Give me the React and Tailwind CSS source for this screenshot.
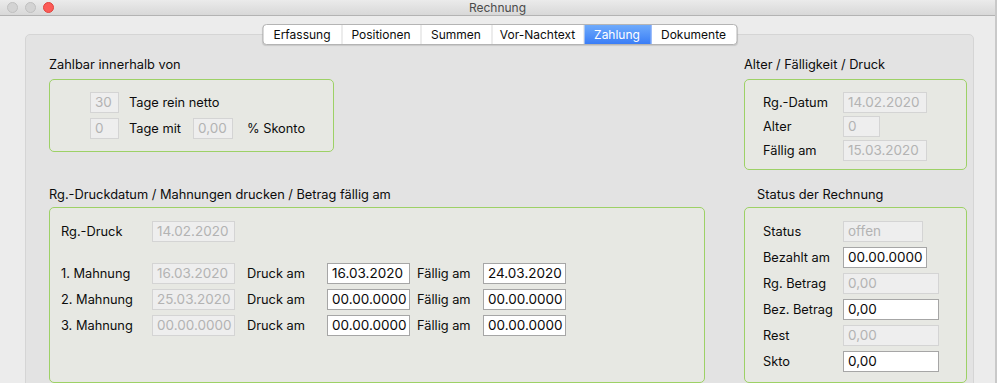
import React from "react"

const tabs = [
  ["Erfassung", 79],
  ["Positionen", 79],
  ["Summen", 71],
  ["Vor-Nachtext", 92],
  ["Zahlung", 67],
  ["Dokumente", 85],
]

function Field({ value, width, disabled }) {
  return (
    <div
      className={
        "h-[21px] flex items-center pl-[4px] text-[13.5px] leading-none border " +
        (disabled
          ? "bg-[#eeeeee] border-[#d4d4d4] text-[#b3b3b3]"
          : "bg-white border-[#a6a6a6] text-[#0a0a0a]")
      }
      style={{ width }}
    >
      {value}
    </div>
  )
}

function Row({ label, labelWidth, children }) {
  return (
    <div className="flex items-center h-[21px]">
      <span className="shrink-0" style={{ width: labelWidth }}>
        {label}
      </span>
      {children}
    </div>
  )
}

function Group({ title, titleGap, className, children }) {
  return (
    <div className="flex flex-col">
      <div className="h-[16px] leading-[16px]" style={{ marginBottom: titleGap }}>
        {title}
      </div>
      <div className={"border border-[#9dd166] rounded-[5px] bg-[#e7e8e3] " + className}>{children}</div>
    </div>
  )
}

export default function App() {
  return (
    <div className="w-[997px] h-[383px] overflow-hidden bg-[#c9c9c9] font-['Inter','Liberation_Sans',sans-serif] text-[12.8px] text-[#0c0c0c]">
      <div className="w-[995px] h-[383px] bg-[#ececec] flex flex-col">
        {/* title bar */}
        <div className="h-[16px] shrink-0 grid grid-cols-[1fr_auto_1fr] items-center bg-gradient-to-b from-[#ebebeb] to-[#d8d8d8] border-b border-[#b3b3b3]">
          <div className="flex items-center gap-[7px] pl-[7px]">
            <span className="w-[11px] h-[11px] rounded-full bg-[#d3d3d3] border border-[#c0c0c0]" />
            <span className="w-[11px] h-[11px] rounded-full bg-[#d3d3d3] border border-[#c0c0c0]" />
            <span className="w-[11px] h-[11px] rounded-full bg-[#fc5b57] border border-[#e0443e]" />
          </div>
          <div className="text-[12px] leading-none text-[#4b4b4b]">Rechnung</div>
          <div />
        </div>

        {/* tab panel */}
        <div className="pl-[25px] pt-[18px]">
          <div className="relative w-[949px] h-[360px] rounded-t-[5px] border border-[#d5d5d5] bg-[#e3e3e3] pt-[22px] pl-[23px]">
            <div className="absolute top-[-11px] left-1/2 -translate-x-1/2 flex h-[21px] rounded-[4px] border border-[#b4b4b4] bg-white shadow-[0_1px_1px_rgba(0,0,0,0.12)] overflow-hidden text-[12px]">
              {tabs.map(([name, w], i) => (
                <div
                  key={name}
                  className={
                    "flex items-center justify-center " +
                    (i < tabs.length - 1 ? "border-r border-[#dadada] " : "") +
                    (name === "Zahlung"
                      ? "bg-gradient-to-b from-[#6eaafb] to-[#3a7df6] text-white border-r-[#3a7df6]"
                      : "text-[#0c0c0c]")
                  }
                  style={{ width: w }}
                >
                  {name}
                </div>
              ))}
            </div>

            <div className="grid grid-cols-[656px_223px] gap-x-[39px] gap-y-[17px] items-start">
              <Group title="Zahlbar innerhalb von" titleGap={6} className="w-[285px] pl-[40px] pt-[12px] pb-[12px] flex flex-col gap-[5px]">
                <div className="flex items-center h-[21px]">
                  <Field value="30" width={29} disabled />
                  <span className="ml-[10px]">Tage rein netto</span>
                </div>
                <div className="flex items-center h-[21px]">
                  <Field value="0" width={29} disabled />
                  <span className="ml-[10px] w-[64px]">Tage mit</span>
                  <Field value="0,00" width={40} disabled />
                  <span className="ml-[14px]">% Skonto</span>
                </div>
              </Group>

              <Group title="Alter / Fälligkeit / Druck" titleGap={6} className="pl-[18px] pt-[12px] pb-[8px] flex flex-col gap-[3px]">
                <Row label="Rg.-Datum" labelWidth={80}>
                  <Field value="14.02.2020" width={84} disabled />
                </Row>
                <Row label="Alter" labelWidth={80}>
                  <Field value="0" width={37} disabled />
                </Row>
                <Row label="Fällig am" labelWidth={80}>
                  <Field value="15.03.2020" width={84} disabled />
                </Row>
              </Group>

              <Group title="Rg.-Druckdatum / Mahnungen drucken / Betrag fällig am" titleGap={4} className="h-[176px] pl-[11px] pt-[13px] flex flex-col">
                <Row label="Rg.-Druck" labelWidth={91}>
                  <Field value="14.02.2020" width={83} disabled />
                </Row>
                <div className="mt-[21px] flex flex-col gap-[5px]">
                  {[
                    ["1. Mahnung", "16.03.2020", "16.03.2020", "24.03.2020"],
                    ["2. Mahnung", "25.03.2020", "00.00.0000", "00.00.0000"],
                    ["3. Mahnung", "00.00.0000", "00.00.0000", "00.00.0000"],
                  ].map(([label, a, b, c]) => (
                    <Row key={label} label={label} labelWidth={91}>
                      <Field value={a} width={83} disabled />
                      <span className="ml-[12px] w-[80px]">Druck am</span>
                      <Field value={b} width={83} />
                      <span className="ml-[7px] w-[66px]">Fällig am</span>
                      <Field value={c} width={83} />
                    </Row>
                  ))}
                </div>
              </Group>

              <Group title={<span className="pl-[13px]">Status der Rechnung</span>} titleGap={4} className="h-[176px] pl-[18px] pt-[13px] flex flex-col gap-[5px]">
                <Row label="Status" labelWidth={80}>
                  <Field value="offen" width={80} disabled />
                </Row>
                <Row label="Bezahlt am" labelWidth={80}>
                  <Field value="00.00.0000" width={84} />
                </Row>
                <Row label="Rg. Betrag" labelWidth={80}>
                  <Field value="0,00" width={96} disabled />
                </Row>
                <Row label="Bez. Betrag" labelWidth={80}>
                  <Field value="0,00" width={96} />
                </Row>
                <Row label="Rest" labelWidth={80}>
                  <Field value="0,00" width={96} disabled />
                </Row>
                <Row label="Skto" labelWidth={80}>
                  <Field value="0,00" width={96} />
                </Row>
              </Group>
            </div>
          </div>
        </div>
      </div>
    </div>
  )
}
